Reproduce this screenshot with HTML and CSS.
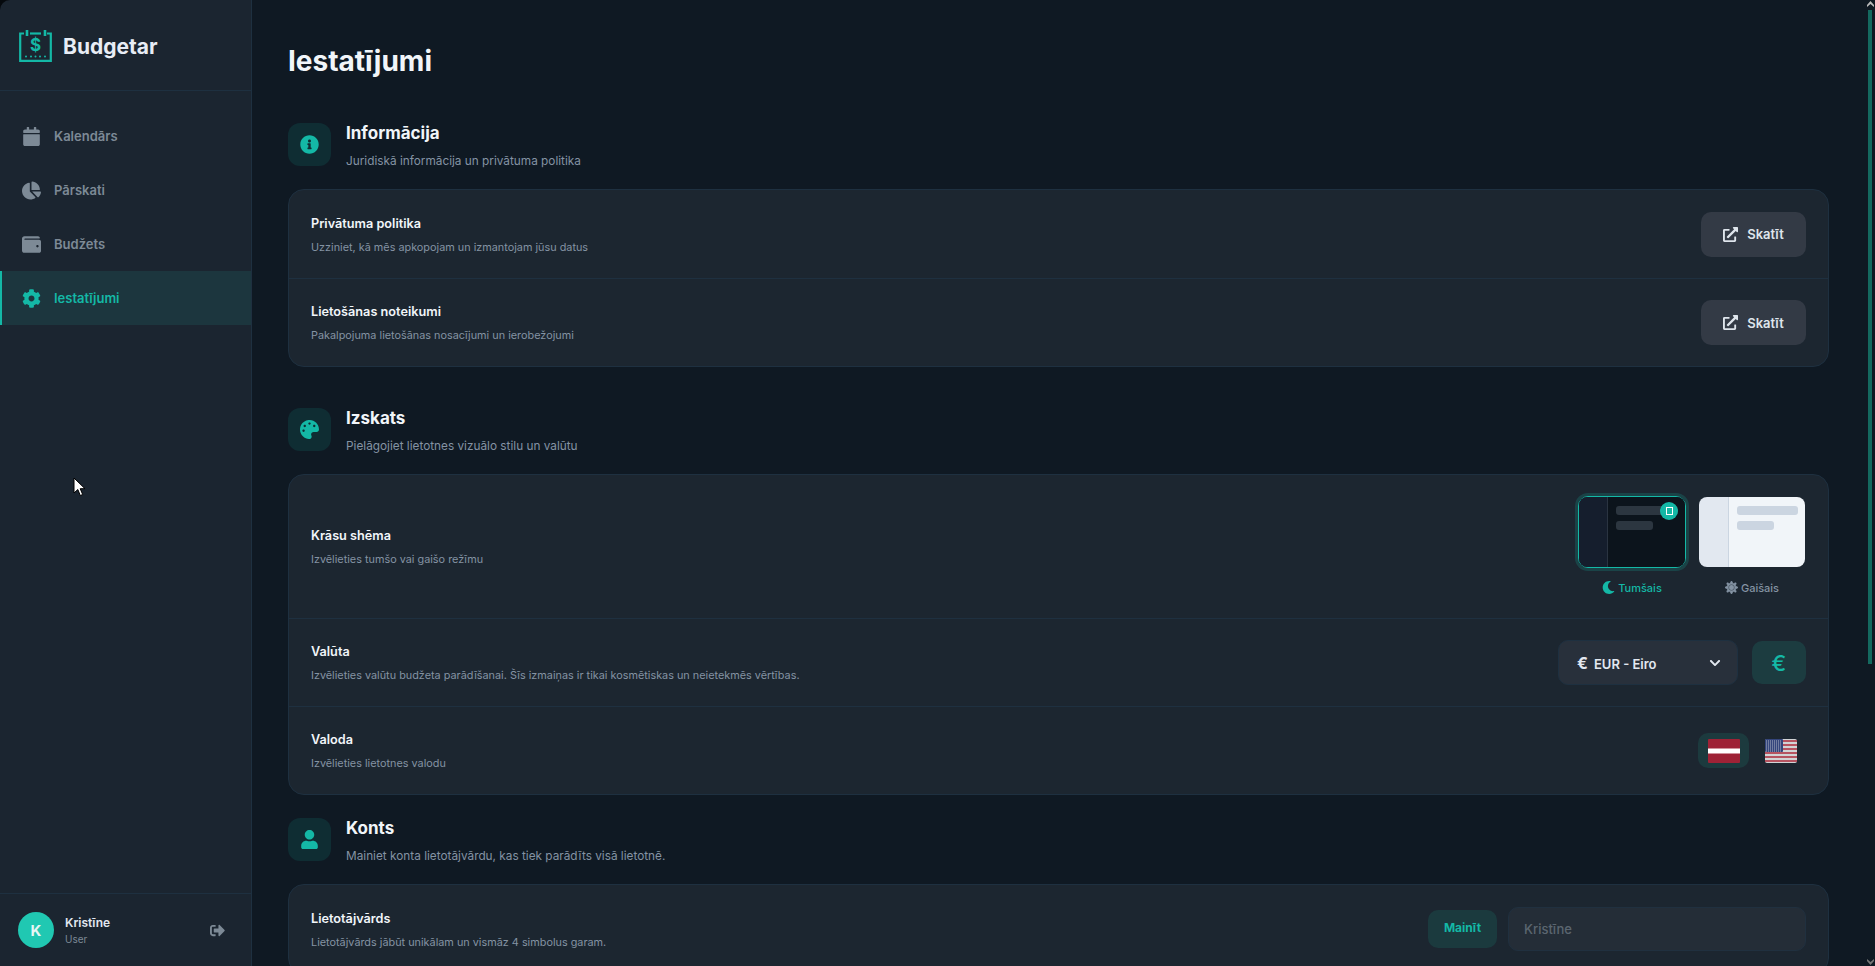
FILE: index.html
```html
<!DOCTYPE html>
<html lang="lv">
<head>
    <meta charset="UTF-8">
    <title>Budgetar - Iestatījumi</title>
    <link rel="stylesheet" href="styles.css">
</head>
<body>

<div class="app">
    <aside class="sidebar">
        <div class="brand">
            <svg class="brand-logo" viewBox="0 0 33 33" fill="none" stroke="#14b8a6" stroke-width="2.200">
                <path d="M5 4.500H1.200v27.300h30.600V4.500H28"/>
                <path d="M11 4.500h11"/>
                <path d="M8 1v6M26 1v6" stroke-width="2.600"/>
                <path d="M7 27.500h0M12 27.500h0M16.500 27.500h0M21 27.500h0M26 27.500h0" stroke-linecap="round" stroke-width="2"/>
                <text x="16.500" y="21.500" text-anchor="middle" class="brand-dollar">$</text>
            </svg>
            <span class="brand-name">Budgetar</span>
        </div>

        <nav class="nav">
            <a class="nav-item" href="#">
                <svg class="nav-icon" viewBox="0 0 448 512"><path d="M12 192h424c6.600 0 12 5.400 12 12v260c0 26.500-21.500 48-48 48H48c-26.500 0-48-21.500-48-48V204c0-6.600 5.400-12 12-12zm436-44v-36c0-26.500-21.500-48-48-48h-48V12c0-6.600-5.400-12-12-12h-40c-6.600 0-12 5.400-12 12v52H160V12c0-6.600-5.400-12-12-12h-40c-6.600 0-12 5.400-12 12v52H48C21.500 64 0 85.500 0 112v36c0 6.600 5.400 12 12 12h424c6.600 0 12-5.400 12-12z"/></svg>
                Kalendārs
            </a>
            <a class="nav-item" href="#">
                <svg class="nav-icon" viewBox="0 0 544 512"><path d="M527.790 288H290.500l158.030 158.030c6.040 6.040 15.980 6.530 22.190.68 38.700-36.460 65.320-85.610 73.130-140.860 1.340-9.460-6.510-17.850-16.060-17.850zm-15.830-64.800C503.720 103.740 408.260 8.280 288.800.04 279.680-.59 272 7.100 272 16.240V240h223.770c9.140 0 16.820-7.680 16.190-16.800zM224 288V50.710c0-9.550-8.390-17.400-17.840-16.060C86.990 51.490-4.100 155.600.14 280.370 4.500 408.510 114.830 513.590 243.030 511.980c50.400-.63 96.970-16.870 135.260-44.030 7.900-5.600 8.420-17.230 1.570-24.080L224 288z"/></svg>
                Pārskati
            </a>
            <a class="nav-item" href="#">
                <svg class="nav-icon" viewBox="0 0 512 512"><path d="M461.200 128H80c-8.840 0-16-7.160-16-16s7.160-16 16-16h384c8.840 0 16-7.160 16-16 0-26.510-21.490-48-48-48H64C28.650 32 0 60.650 0 96v320c0 35.350 28.650 64 64 64h397.200c28.020 0 50.800-21.530 50.800-48V176c0-26.470-22.780-48-50.800-48zM416 336c-17.670 0-32-14.330-32-32s14.330-32 32-32 32 14.330 32 32-14.330 32-32 32z"/></svg>
                Budžets
            </a>
            <a class="nav-item active" href="#">
                <svg class="nav-icon" viewBox="0 0 512 512"><path d="M487.400 315.700l-42.600-24.600c4.300-23.200 4.300-47 0-70.200l42.600-24.600c4.900-2.800 7.100-8.600 5.500-14-11.100-35.600-30-67.800-54.700-94.600-3.800-4.100-10-5.100-14.800-2.300L380.800 110c-17.900-15.400-38.500-27.300-60.800-35.100V25.800c0-5.600-3.900-10.500-9.400-11.700-36.700-8.200-74.300-7.800-109.200 0-5.500 1.200-9.400 6.100-9.400 11.700V75c-22.200 7.900-42.800 19.800-60.800 35.100L88.700 85.500c-4.900-2.800-11-1.900-14.800 2.300-24.700 26.700-43.600 58.900-54.700 94.600-1.700 5.400.6 11.200 5.500 14L67.300 221c-4.300 23.200-4.300 47 0 70.200l-42.600 24.600c-4.900 2.800-7.100 8.600-5.500 14 11.100 35.600 30 67.800 54.700 94.600 3.800 4.100 10 5.100 14.800 2.300l42.600-24.600c17.900 15.400 38.500 27.300 60.800 35.100v49.200c0 5.600 3.900 10.500 9.400 11.700 36.700 8.200 74.300 7.800 109.200 0 5.500-1.200 9.400-6.100 9.400-11.700v-49.200c22.200-7.900 42.800-19.800 60.800-35.100l42.600 24.600c4.900 2.800 11 1.900 14.800-2.300 24.700-26.700 43.600-58.900 54.700-94.600 1.500-5.500-.7-11.300-5.600-14.100zM256 336c-44.100 0-80-35.900-80-80s35.900-80 80-80 80 35.900 80 80-35.900 80-80 80z"/></svg>
                Iestatījumi
            </a>
        </nav>

        <div class="user-box">
            <div class="avatar">K</div>
            <div class="user-info">
                <div class="user-name">Kristīne</div>
                <div class="user-role">User</div>
            </div>
            <svg class="logout" viewBox="0 0 512 512"><path d="M497 273L329 441c-15 15-41 4.500-41-17v-96H152c-13.300 0-24-10.700-24-24v-96c0-13.300 10.700-24 24-24h136V88c0-21.400 25.900-32 41-17l168 168c9.300 9.400 9.300 24.600 0 34zM192 436v-40c0-6.600-5.400-12-12-12H96c-17.700 0-32-14.300-32-32V160c0-17.700 14.300-32 32-32h84c6.600 0 12-5.400 12-12V76c0-6.600-5.400-12-12-12H96c-53 0-96 43-96 96v192c0 53 43 96 96 96h84c6.600 0 12-5.400 12-12z"/></svg>
        </div>
    </aside>

    <main class="main">
        <h1 class="page-title">Iestatījumi</h1>

        <section class="section">
            <div class="section-head">
                <div class="section-icon">
                    <svg viewBox="0 0 512 512"><path d="M256 8C119.043 8 8 119.083 8 256c0 136.997 111.043 248 248 248s248-111.003 248-248C504 119.083 392.957 8 256 8zm0 110c23.196 0 42 18.804 42 42s-18.804 42-42 42-42-18.804-42-42 18.804-42 42-42zm56 254c0 6.627-5.373 12-12 12h-88c-6.627 0-12-5.373-12-12v-24c0-6.627 5.373-12 12-12h12v-64h-12c-6.627 0-12-5.373-12-12v-24c0-6.627 5.373-12 12-12h64c6.627 0 12 5.373 12 12v100h12c6.627 0 12 5.373 12 12v24z"/></svg>
                </div>
                <div>
                    <h2 class="section-title">Informācija</h2>
                    <p class="section-desc">Juridiskā informācija un privātuma politika</p>
                </div>
            </div>
            <div class="card">
                <div class="row">
                    <div>
                        <div class="row-title">Privātuma politika</div>
                        <div class="row-desc">Uzziniet, kā mēs apkopojam un izmantojam jūsu datus</div>
                    </div>
                    <button class="btn-view">
                        <svg viewBox="0 0 512 512"><path d="M432 320H400a16 16 0 0 0-16 16V448H64V128H208a16 16 0 0 0 16-16V80a16 16 0 0 0-16-16H48A48 48 0 0 0 0 112V464a48 48 0 0 0 48 48H400a48 48 0 0 0 48-48V336A16 16 0 0 0 432 320ZM488 0h-128c-21.370 0-32.050 25.910-17 41l35.730 35.730L135 320.370a24 24 0 0 0 0 34L157.670 377a24 24 0 0 0 34 0L435.280 133.320 471 169c15 15 41 4.500 41-17V24A24 24 0 0 0 488 0Z"/></svg>
                        Skatīt
                    </button>
                </div>
                <div class="row">
                    <div>
                        <div class="row-title">Lietošānas noteikumi</div>
                        <div class="row-desc">Pakalpojuma lietošānas nosacījumi un ierobežojumi</div>
                    </div>
                    <button class="btn-view">
                        <svg viewBox="0 0 512 512"><path d="M432 320H400a16 16 0 0 0-16 16V448H64V128H208a16 16 0 0 0 16-16V80a16 16 0 0 0-16-16H48A48 48 0 0 0 0 112V464a48 48 0 0 0 48 48H400a48 48 0 0 0 48-48V336A16 16 0 0 0 432 320ZM488 0h-128c-21.370 0-32.050 25.910-17 41l35.730 35.730L135 320.370a24 24 0 0 0 0 34L157.670 377a24 24 0 0 0 34 0L435.280 133.320 471 169c15 15 41 4.500 41-17V24A24 24 0 0 0 488 0Z"/></svg>
                        Skatīt
                    </button>
                </div>
            </div>
        </section>

        <section class="section section-tight">
            <div class="section-head">
                <div class="section-icon">
                    <svg viewBox="0 0 512 512"><path d="M204.300 5C104.900 24.400 24.800 104.300 5.200 203.400c-37 187 131.700 326.400 258.800 306.700 41.200-6.400 61.400-54.600 42.500-91.700-23.100-45.400 9.900-98.400 60.900-98.400h79.700c35.800 0 64.800-29.600 64.900-65.300C511.500 97.100 368.100-26.900 204.300 5zM96 320c-17.700 0-32-14.300-32-32s14.300-32 32-32 32 14.300 32 32-14.300 32-32 32zm32-128c-17.700 0-32-14.300-32-32s14.300-32 32-32 32 14.300 32 32-14.300 32-32 32zm128-64c-17.700 0-32-14.300-32-32s14.300-32 32-32 32 14.300 32 32-14.300 32-32 32zm128 64c-17.700 0-32-14.300-32-32s14.300-32 32-32 32 14.300 32 32-14.300 32-32 32z"/></svg>
                </div>
                <div>
                    <h2 class="section-title">Izskats</h2>
                    <p class="section-desc">Pielāgojiet lietotnes vizuālo stilu un valūtu</p>
                </div>
            </div>
            <div class="card">
                <div class="row row-theme">
                    <div>
                        <div class="row-title">Krāsu shēma</div>
                        <div class="row-desc">Izvēlieties tumšo vai gaišo režīmu</div>
                    </div>
                    <div class="themes">
                        <div class="theme">
                            <div class="preview preview-dark">
                                <div class="preview-side"></div>
                                <div class="preview-body">
                                    <div class="preview-line"></div>
                                    <div class="preview-line short"></div>
                                </div>
                                <span class="preview-check"><i></i></span>
                            </div>
                            <div class="theme-label selected">
                                <svg viewBox="0 0 512 512"><path d="M283.211 512c78.962 0 151.079-35.925 198.857-94.792 7.068-8.708-.639-21.430-11.562-19.350-124.203 23.654-238.262-71.576-238.262-196.954 0-72.222 38.662-138.635 101.498-174.394 9.686-5.512 7.250-20.197-3.756-22.230A258.156 258.156 0 0 0 283.211 0c-141.309 0-256 114.511-256 256 0 141.309 114.511 256 256 256z"/></svg>
                                Tumšais
                            </div>
                        </div>
                        <div class="theme">
                            <div class="preview preview-light">
                                <div class="preview-side"></div>
                                <div class="preview-body">
                                    <div class="preview-line"></div>
                                    <div class="preview-line short"></div>
                                </div>
                            </div>
                            <div class="theme-label">
                                <svg class="sun" viewBox="0 0 512 512"><path d="M256 160c-52.900 0-96 43.100-96 96s43.100 96 96 96 96-43.100 96-96-43.100-96-96-96zm246.400 80.500l-94.700-47.300 33.500-100.400c4.500-13.600-8.400-26.500-21.900-21.900l-100.400 33.500-47.400-94.800c-6.400-12.800-24.600-12.800-31 0l-47.300 94.700L92.700 70.800c-13.600-4.500-26.500 8.400-21.900 21.900l33.500 100.400-94.700 47.400c-12.800 6.400-12.800 24.600 0 31l94.700 47.300-33.500 100.500c-4.500 13.600 8.400 26.500 21.900 21.900l100.400-33.500 47.300 94.700c6.400 12.800 24.600 12.800 31 0l47.300-94.700 100.400 33.500c13.600 4.500 26.500-8.400 21.900-21.900l-33.500-100.400 94.700-47.300c13-6.500 13-24.700.2-31.100zm-155.900 106c-49.900 49.900-131.100 49.900-181 0-49.900-49.900-49.900-131.100 0-181 49.900-49.900 131.100-49.900 181 0 49.900 49.900 49.900 131.100 0 181z"/></svg>
                                Gaišais
                            </div>
                        </div>
                    </div>
                </div>
                <div class="row">
                    <div>
                        <div class="row-title">Valūta</div>
                        <div class="row-desc">Izvēlieties valūtu budžeta parādīšanai. Šīs izmaiņas ir tikai kosmētiskas un neietekmēs vērtības.</div>
                    </div>
                    <div class="currency">
                        <div class="select">
                            <span class="select-value"><span class="euro">€</span>EUR - Eiro</span>
                            <svg viewBox="0 0 448 512"><path d="M207.029 381.476L12.686 187.132c-9.373-9.373-9.373-24.569 0-33.941l22.667-22.667c9.357-9.357 24.522-9.375 33.901-.04L224 284.505l154.745-154.021c9.379-9.335 24.544-9.317 33.901.04l22.667 22.667c9.373 9.373 9.373 24.569 0 33.941L240.971 381.476c-9.373 9.372-24.569 9.372-33.942 0z"/></svg>
                        </div>
                        <button class="btn-euro">€</button>
                    </div>
                </div>
                <div class="row">
                    <div>
                        <div class="row-title">Valoda</div>
                        <div class="row-desc">Izvēlieties lietotnes valodu</div>
                    </div>
                    <div class="langs">
                        <button class="lang active">
                            <svg class="flag" viewBox="0 0 32 24">
                                <rect width="32" height="24" rx="1" fill="#9e2236"/>
                                <rect y="9.500" width="32" height="5" fill="#fff"/>
                            </svg>
                        </button>
                        <button class="lang">
                            <svg class="flag flag-off" viewBox="0 0 32 24">
                                <rect width="32" height="24" rx="2" fill="#fff"/>
                                <path d="M0 1h32v2H0zM0 5h32v2H0zM0 9h32v2H0zM0 13h32v2H0zM0 17h32v2H0zM0 21h32v2H0z" fill="#dd5f6c"/>
                                <rect width="18" height="13" rx="1" fill="#3a4d8f"/>
                                <path d="M1 2h16M1 4h16M1 6h16M1 8h16M1 10h16M1 12h16" stroke="#d5daea" stroke-width="1" stroke-dasharray="1 1"/>
                            </svg>
                        </button>
                    </div>
                </div>
            </div>
        </section>

        <section class="section">
            <div class="section-head">
                <div class="section-icon">
                    <svg viewBox="0 0 448 512"><path d="M224 256c70.700 0 128-57.300 128-128S294.700 0 224 0 96 57.300 96 128s57.300 128 128 128zm89.600 32h-16.700c-22.200 10.200-46.900 16-72.900 16s-50.600-5.800-72.900-16h-16.700C60.200 288 0 348.200 0 422.400V464c0 26.500 21.500 48 48 48h352c26.500 0 48-21.500 48-48v-41.600c0-74.200-60.200-134.400-134.400-134.400z"/></svg>
                </div>
                <div>
                    <h2 class="section-title">Konts</h2>
                    <p class="section-desc">Mainiet konta lietotājvārdu, kas tiek parādīts visā lietotnē.</p>
                </div>
            </div>
            <div class="card">
                <div class="row">
                    <div>
                        <div class="row-title">Lietotājvārds</div>
                        <div class="row-desc">Lietotājvārds jābūt unikālam un vismāz 4 simbolus garam.</div>
                    </div>
                    <div class="username">
                        <button class="btn-change">Mainīt</button>
                        <input class="input" type="text" placeholder="Kristīne">
                    </div>
                </div>
            </div>
        </section>
    </main>

    <div class="scrollbar">
        <svg class="scroll-arrow" viewBox="0 0 9 10"><path d="M4.500 1 8 5v2L4.500 4 1 7V5z" fill="#bbb"/></svg>
        <div class="scroll-thumb"></div>
        <svg class="scroll-arrow scroll-down" viewBox="0 0 9 10"><path d="M4.500 9 8 5V3L4.500 6 1 3v2z" fill="#777"/></svg>
    </div>
</div>

<svg class="cursor" viewBox="0 0 13 20">
    <path d="M1 1v15l3.800-3.500 2.500 6 2.400-1-2.500-5.800H12z" fill="#fff" stroke="#000" stroke-width="1"/>
</svg>

</body>
</html>
```

FILE: styles.css
```css
* {
    box-sizing: border-box;
}
body {
    font-family: Inter, 'Noto Sans', sans-serif;
    background-color: #05090d;
    color: #f1f5f9;
    margin: 0;
    padding: 0;
    overflow: hidden;
}
button {
    font-family: inherit;
    cursor: pointer;
}
.app {
    display: flex;
    height: 966px;
}

/* Sidebar */
.sidebar {
    width: 252px;
    flex-shrink: 0;
    display: flex;
    flex-direction: column;
    background-color: #1b2530;
    border-right: 1px solid #1e3040;
    border-top-left-radius: 10px;
}
.brand {
    height: 91px;
    display: flex;
    align-items: center;
    gap: 11px;
    padding-left: 19px;
    border-bottom: 1px solid #1e3040;
}
.brand-logo {
    width: 33px;
    height: 33px;
}
.brand-dollar {
    font-size: 17px;
    font-weight: 700;
    fill: #14b8a6;
    stroke: none;
}
.brand-name {
    font-size: 21px;
    font-weight: 700;
    color: #e8edf5;
    padding-top: 2px;
}
.nav {
    flex: 1;
    padding-top: 18px;
}
.nav-item {
    height: 54px;
    display: flex;
    align-items: center;
    gap: 13px;
    padding-left: 20px;
    color: #7d8a96;
    font-size: 13px;
    font-weight: 600;
    text-decoration: none;
    border-left: 2px solid transparent;
}
.nav-item.active {
    background-color: #1c363e;
    border-left-color: #14b8a6;
    color: #14b8a6;
}
.nav-icon {
    width: 19px;
    height: 19px;
    fill: currentColor;
}
.user-box {
    height: 73px;
    display: flex;
    align-items: center;
    padding-left: 18px;
    border-top: 1px solid #1e3040;
}
.avatar {
    width: 36px;
    height: 36px;
    border-radius: 50%;
    background-color: #20c8b2;
    color: #e8f6f5;
    font-size: 15px;
    font-weight: 700;
    display: flex;
    align-items: center;
    justify-content: center;
}
.user-info {
    flex: 1;
    margin-left: 11px;
    padding-top: 1px;
}
.user-name {
    font-size: 12px;
    font-weight: 600;
    color: #e2e8f0;
    line-height: 16px;
}
.user-role {
    font-size: 10px;
    color: #7d8a96;
    line-height: 14px;
    margin-top: 1px;
}
.logout {
    width: 15px;
    height: 15px;
    fill: #7d8a96;
    margin-right: 26px;
}

/* Main */
.main {
    flex: 1;
    height: 966px;
    overflow: hidden;
    background-color: #0f1923;
    padding: 44px 37px 0 36px;
}
.scrollbar {
    width: 9px;
    flex-shrink: 0;
    display: flex;
    flex-direction: column;
    background-color: #0f1923;
}
.scroll-arrow {
    width: 9px;
    height: 10px;
    flex-shrink: 0;
}
.scroll-thumb {
    width: 4px;
    height: 654px;
    margin-left: 2px;
    background-color: #14695f;
}
.scroll-down {
    margin-top: auto;
}
.page-title {
    font-size: 28px;
    font-weight: 700;
    line-height: 34px;
    margin: 0 0 45px;
    color: #f1f5f9;
}
.section {
    margin-bottom: 41px;
}
.section-tight {
    margin-bottom: 23px;
}
.section-head {
    height: 43px;
    display: flex;
    gap: 15px;
    margin-bottom: 23px;
}
.section-icon {
    width: 43px;
    height: 43px;
    flex-shrink: 0;
    border-radius: 12px;
    background-color: #0f2d33;
    display: flex;
    align-items: center;
    justify-content: center;
}
.section-icon svg {
    width: 19px;
    height: 19px;
    fill: #14b8a6;
}
.section-title {
    font-size: 17px;
    font-weight: 700;
    line-height: 24px;
    margin: -2px 0 6px;
    color: #f1f5f9;
}
.section-desc {
    font-size: 11.800px;
    line-height: 20px;
    margin: 0;
    color: #8493a3;
}

/* Cards */
.card {
    background-color: #1c2630;
    border: 1px solid #1e3040;
    border-radius: 16px;
}
.row {
    min-height: 88px;
    display: flex;
    align-items: center;
    justify-content: space-between;
    padding: 0 22px;
}
.row + .row {
    border-top: 1px solid #1e3040;
}
.row-theme {
    padding-top: 21px;
    padding-bottom: 21px;
}
.row-title {
    font-size: 12.700px;
    font-weight: 600;
    line-height: 20px;
    color: #f1f5f9;
}
.row-desc {
    font-size: 10.850px;
    line-height: 16px;
    margin-top: 5px;
    color: #8493a3;
}
.btn-view {
    width: 105px;
    height: 45px;
    display: flex;
    align-items: center;
    justify-content: center;
    gap: 9px;
    border: 0;
    border-radius: 10px;
    background-color: #333a45;
    color: #dfe5ec;
    font-size: 13px;
    font-weight: 600;
}
.btn-view svg {
    width: 15px;
    height: 15px;
    fill: currentColor;
}

/* Theme picker */
.themes {
    display: flex;
    gap: 12px;
}
.theme {
    width: 108px;
    display: flex;
    flex-direction: column;
    align-items: center;
    gap: 10px;
}
.preview {
    position: relative;
    width: 108px;
    height: 72px;
    display: flex;
    border-radius: 10px;
    border: 1px solid #1c2630;
}
.preview-side {
    width: 29px;
    border-radius: 8px 0 0 8px;
}
.preview-body {
    flex: 1;
    padding: 9px 7px 0 8px;
    border-radius: 0 8px 8px 0;
}
.preview-line {
    height: 9px;
    border-radius: 3px;
    margin-bottom: 6px;
}
.preview-line.short {
    width: 37px;
}
.preview-dark {
    border-color: #14b8a6;
    box-shadow: 0 0 0 3px rgba(20, 184, 166, 0.2);
}
.preview-dark .preview-side {
    background-color: #151e2d;
    border-right: 1px solid #2a3441;
}
.preview-dark .preview-body {
    background-color: #0c141c;
}
.preview-dark .preview-line {
    background-color: #2c3640;
}
.preview-light .preview-side {
    background-color: #e2e8f0;
    border-right: 1px solid #cbd5e1;
    width: 30px;
}
.preview-light .preview-body {
    background-color: #f1f5f9;
}
.preview-light .preview-line {
    background-color: #cbd5e1;
}
.preview-check {
    position: absolute;
    top: 5px;
    right: 7px;
    width: 18px;
    height: 18px;
    border-radius: 50%;
    background-color: #14b8a6;
    display: flex;
    align-items: center;
    justify-content: center;
}
.preview-check i {
    width: 7px;
    height: 8px;
    border: 1px solid #fff;
}
.theme-label {
    height: 19px;
    display: flex;
    align-items: center;
    gap: 3px;
    font-size: 11px;
    font-weight: 500;
    color: #8493a3;
}
.theme-label svg {
    width: 13px;
    height: 13px;
    fill: currentColor;
}
.theme-label .sun {
    stroke: currentColor;
    stroke-width: 24px;
}
.theme-label.selected {
    color: #14b8a6;
}

/* Currency */
.currency {
    display: flex;
    align-items: center;
    gap: 14px;
}
.select {
    width: 180px;
    height: 45px;
    display: flex;
    align-items: center;
    justify-content: space-between;
    padding: 0 16px 0 18px;
    background-color: #28303b;
    border: 1px solid #1e3040;
    border-radius: 10px;
    font-size: 13px;
    font-weight: 600;
    color: #e2e8f0;
}
.select svg {
    width: 12px;
    height: 12px;
    fill: currentColor;
}
.euro {
    font-size: 16px;
    font-weight: 700;
    margin-right: 6px;
}
.btn-euro {
    width: 54px;
    height: 43px;
    border: 0;
    border-radius: 10px;
    background-color: #1c3c40;
    color: #14b8a6;
    font-size: 22px;
    font-weight: 500;
}

/* Language */
.langs {
    display: flex;
    gap: 6px;
}
.lang {
    width: 51px;
    height: 35px;
    padding: 0;
    border: 0;
    border-radius: 10px;
    background: none;
    display: flex;
    align-items: center;
    justify-content: center;
}
.lang.active {
    background-color: #1c3a3e;
}
.flag {
    width: 32px;
    height: 24px;
}
.flag-off {
    opacity: 0.8;
}

/* Username */
.username {
    display: flex;
    align-items: center;
    gap: 11px;
}
.btn-change {
    width: 69px;
    height: 38px;
    padding: 0 0 3px;
    border: 0;
    border-radius: 10px;
    background-color: #1b3a3e;
    color: #14b8a6;
    font-size: 12px;
    font-weight: 700;
}
.input {
    width: 298px;
    height: 44px;
    padding: 0 15px;
    background-color: #242d37;
    border: 1px solid #20303f;
    border-radius: 10px;
    font-family: inherit;
    font-size: 13px;
    font-weight: 500;
    color: #e2e8f0;
}
.input::placeholder {
    color: #5b6670;
}

/* Mouse pointer that was on screen */
.cursor {
    position: absolute;
    left: 73px;
    top: 477px;
    width: 13px;
    height: 20px;
}
```
